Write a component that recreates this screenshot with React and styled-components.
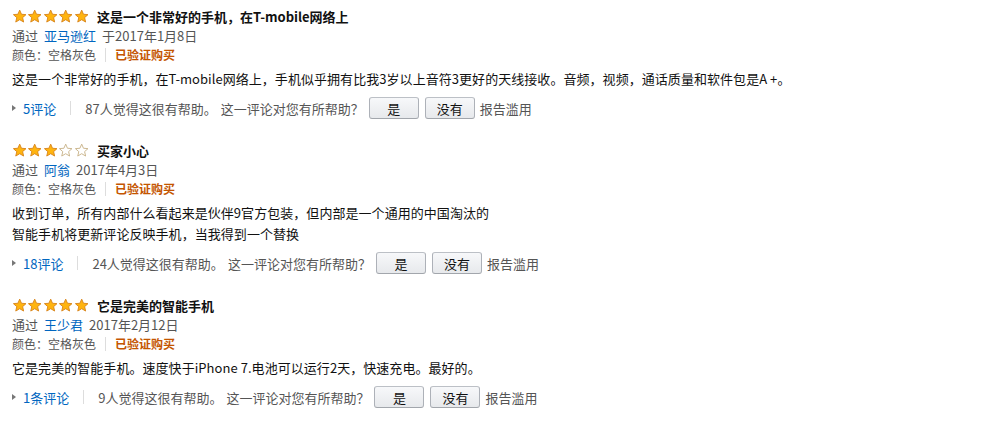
import React from "react";
import styled, { createGlobalStyle } from "styled-components";

const FONT = `"Noto Sans CJK SC", "Noto Sans", sans-serif`;

const GlobalStyle = createGlobalStyle`
  html, body {
    margin: 0;
    padding: 0;
    background: #ffffff;
  }
  body {
    font-family: ${FONT};
    color: #111111;
    font-size: 13px;
  }
`;

const reviews = [
  {
    rating: 5,
    title: "这是一个非常好的手机，在T-mobile网络上",
    author: "亚马逊红",
    date: "于2017年1月8日",
    body: ["这是一个非常好的手机，在T-mobile网络上，手机似乎拥有比我3岁以上音符3更好的天线接收。音频，视频，通话质量和软件包是A +。"],
    comments: "5评论",
    helpful: "87人觉得这很有帮助。",
  },
  {
    rating: 3,
    title: "买家小心",
    author: "阿翁",
    date: "2017年4月3日",
    body: [
      "收到订单，所有内部什么看起来是伙伴9官方包装，但内部是一个通用的中国淘汰的",
      "智能手机将更新评论反映手机，当我得到一个替换",
    ],
    comments: "18评论",
    helpful: "24人觉得这很有帮助。",
  },
  {
    rating: 5,
    title: "它是完美的智能手机",
    author: "王少君",
    date: "2017年2月12日",
    body: ["它是完美的智能手机。速度快于iPhone 7.电池可以运行2天，快速充电。最好的。"],
    comments: "1条评论",
    helpful: "9人觉得这很有帮助。",
  },
];

const Page = styled.div`
  padding: 6px 12px 0;
  display: flex;
  flex-direction: column;
  gap: 21px;
`;

const Review = styled.div`
  display: flex;
  flex-direction: column;
`;

const TitleRow = styled.div`
  display: flex;
  align-items: center;
  height: 20px;
  gap: 8px;
`;

const Stars = styled.div`
  display: flex;
  align-items: center;
  width: 77px;
`;

const Title = styled.span`
  font-weight: 700;
  font-size: 13px;
  color: #111111;
`;

const Meta = styled.div`
  height: 19px;
  line-height: 19px;
  color: #555555;
  font-size: 13px;
  display: flex;
  gap: 6px;
`;

const Link = styled.a`
  color: #0066c0;
  text-decoration: none;
`;

const ColorRow = styled.div`
  height: 19px;
  line-height: 19px;
  font-size: 12px;
  color: #555555;
  display: flex;
  align-items: center;
`;

const Divider = styled.span`
  display: inline-block;
  width: 1px;
  height: 14px;
  background: #dddddd;
  margin: 0 ${(p) => p.$space || 9}px;
`;

const Verified = styled.span`
  color: #c45500;
  font-weight: 700;
`;

const Body = styled.div`
  margin-top: 4px;
  line-height: 21px;
  color: #111111;
  font-size: 13px;
  letter-spacing: 0.05px;
`;

const Actions = styled.div`
  margin-top: 8px;
  height: 22px;
  display: flex;
  align-items: center;
  color: #555555;
  font-size: 13px;
`;

const Caret = styled.span`
  width: 0;
  height: 0;
  border-top: 3.5px solid transparent;
  border-bottom: 3.5px solid transparent;
  border-left: 4px solid #777777;
  margin-right: 7px;
`;

const Helpful = styled.span`
  margin-right: ${(p) => p.$mr}px;
`;

const VoteButton = styled.button`
  height: 22px;
  width: ${(p) => p.$w}px;
  padding: 0;
  margin-right: ${(p) => p.$mr}px;
  border: 1px solid #adb1b8;
  border-top-color: #bcc0c6;
  border-bottom-color: #a2a6ac;
  border-radius: 3px;
  background: linear-gradient(to bottom, #f7f8fa, #e7e9ec);
  font-family: ${FONT};
  font-size: 13px;
  color: #111111;
  box-sizing: border-box;
`;

const Star = ({ filled }) => (
  <svg width="15.4" height="15" viewBox="0 0 16 16">
    <path
      d="M8 1.2 L9.9 5.6 L14.7 6 L11.1 9.2 L12.2 13.9 L8 11.4 L3.8 13.9 L4.9 9.2 L1.3 6 L6.1 5.6 Z"
      fill={filled ? "#ffb40f" : "#ffffff"}
      stroke={filled ? "#d9851c" : "#c9b38a"}
      strokeWidth="1"
      strokeLinejoin="round"
    />
  </svg>
);

const App = () => (
  <>
    <GlobalStyle />
    <Page lang="zh-CN">
      {reviews.map((r, i) => (
        <Review key={i}>
          <TitleRow>
            <Stars>
              {[0, 1, 2, 3, 4].map((s) => (
                <Star key={s} filled={s < r.rating} />
              ))}
            </Stars>
            <Title>{r.title}</Title>
          </TitleRow>
          <Meta>
            <span>通过</span>
            <Link href="#">{r.author}</Link>
            <span>{r.date}</span>
          </Meta>
          <ColorRow>
            <span>颜色：空格灰色</span>
            <Divider />
            <Verified>已验证购买</Verified>
          </ColorRow>
          <Body>
            {r.body.map((line, j) => (
              <div key={j}>{line}</div>
            ))}
          </Body>
          <Actions>
            <Caret />
            <Link href="#">{r.comments}</Link>
            <Divider $space={14} />
            <Helpful $mr={4}>{r.helpful}</Helpful>
            <Helpful $mr={5}>这一评论对您有所帮助？</Helpful>
            <VoteButton $w={50} $mr={6}>是</VoteButton>
            <VoteButton $w={50} $mr={5}>没有</VoteButton>
            <span>报告滥用</span>
          </Actions>
        </Review>
      ))}
    </Page>
  </>
);

export default App;
